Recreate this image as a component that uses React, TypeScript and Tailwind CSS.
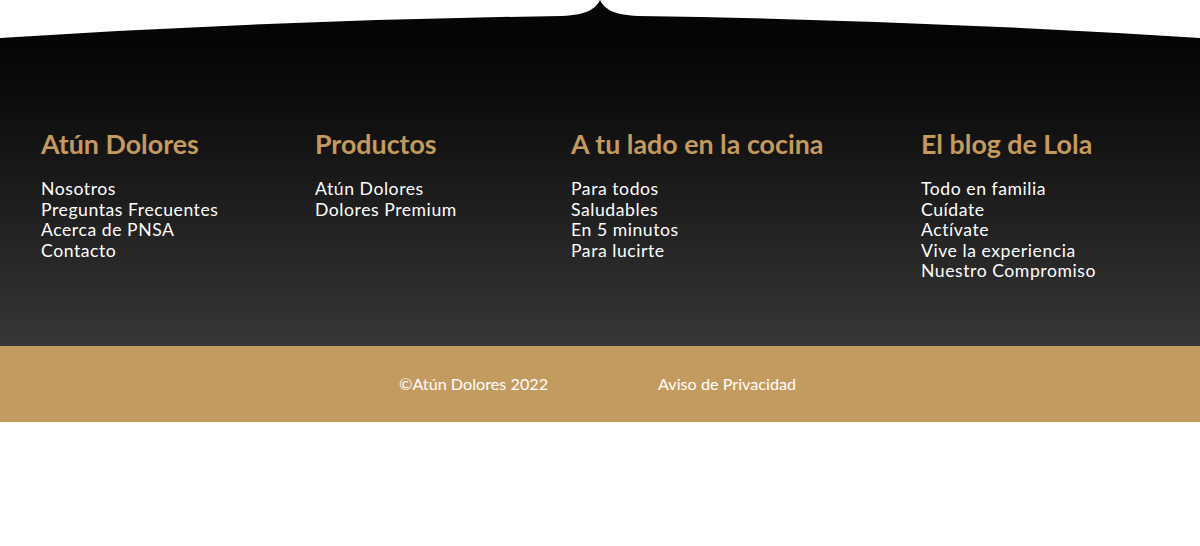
const columns = [
  {
    title: 'Atún Dolores',
    links: ['Nosotros', 'Preguntas Frecuentes', 'Acerca de PNSA', 'Contacto'],
  },
  {
    title: 'Productos',
    links: ['Atún Dolores', 'Dolores Premium'],
  },
  {
    title: 'A tu lado en la cocina',
    links: ['Para todos', 'Saludables', 'En 5 minutos', 'Para lucirte'],
  },
  {
    title: 'El blog de Lola',
    links: ['Todo en familia', 'Cuídate', 'Actívate', 'Vive la experiencia', 'Nuestro Compromiso'],
  },
]

function FooterCap() {
  return (
    <svg viewBox="0 0 1200 40" preserveAspectRatio="none" className="block w-full h-[40px]">
      <path
        d="M0,38 Q280,20 562,16 C588,15 596,8 600,0 C604,8 612,15 638,16 Q920,20 1200,38 L1200,40 L0,40 Z"
        fill="#050505"
      />
    </svg>
  )
}

export default function App() {
  return (
    <div className="w-[1200px] min-h-[546px] bg-white" style={{ fontFamily: 'Lato, "Noto Sans", sans-serif' }}>
      <footer>
        <FooterCap />
        <div className="bg-gradient-to-b from-[#050505] to-[#373737] h-[307px] -mt-px pt-[90px] pl-[41px]">
          <div className="grid grid-cols-[274px_256px_350px_1fr]">
            {columns.map(col => (
              <div key={col.title}>
                <h3 className="text-[26.8px] font-bold text-[#c49a5d] leading-[30px]">{col.title}</h3>
                <ul className="mt-[20px] text-white text-[17.6px] tracking-[0.55px] leading-[20.5px]">
                  {col.links.map(link => (
                    <li key={link}>
                      <a href="#">{link}</a>
                    </li>
                  ))}
                </ul>
              </div>
            ))}
          </div>
        </div>
        <div className="bg-[#c49b5f] h-[76px] flex items-center justify-center gap-[110px] pr-[5px] text-white text-[16.2px]">
          <span>©Atún Dolores 2022</span>
          <a href="#">Aviso de Privacidad</a>
        </div>
      </footer>
    </div>
  )
}
